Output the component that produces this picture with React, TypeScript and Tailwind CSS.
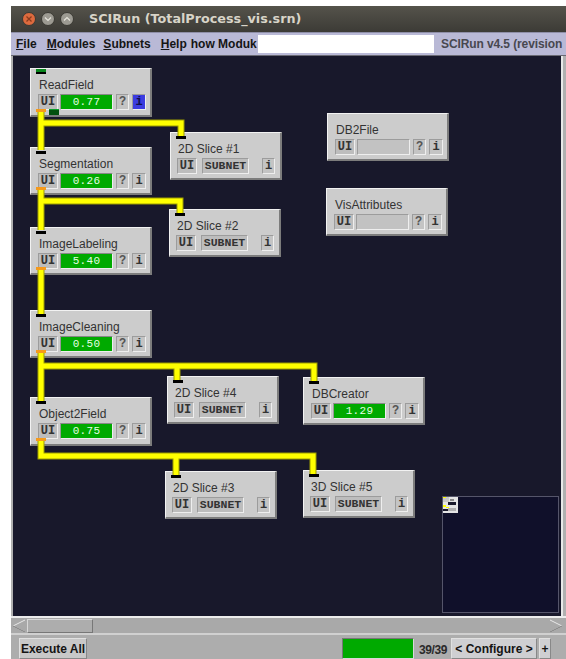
import type { ReactNode } from "react";

const MONO = "font-['Liberation_Mono',monospace]";

type ModuleNode = {
  name: string;
  box: string;
  value?: string;
  kind: "module" | "subnet";
  inPort?: boolean;
  outPort?: boolean;
  sourcePort?: boolean;
  active?: boolean;
};

const NODES: ModuleNode[] = [
  { name: "ReadField", box: "left-[17px] top-[12px] w-[122px] h-[49px]", value: "0.77", kind: "module", outPort: true, sourcePort: true, active: true },
  { name: "Segmentation", box: "left-[17px] top-[91px] w-[122px] h-[48px]", value: "0.26", kind: "module", inPort: true, outPort: true },
  { name: "ImageLabeling", box: "left-[17px] top-[171px] w-[122px] h-[48px]", value: "5.40", kind: "module", inPort: true, outPort: true },
  { name: "ImageCleaning", box: "left-[17px] top-[254px] w-[122px] h-[48px]", value: "0.50", kind: "module", inPort: true, outPort: true },
  { name: "Object2Field", box: "left-[17px] top-[341px] w-[122px] h-[49px]", value: "0.75", kind: "module", inPort: true, outPort: true },
  { name: "2D Slice #1", box: "left-[157px] top-[76px] w-[112px] h-[48px]", kind: "subnet", inPort: true },
  { name: "2D Slice #2", box: "left-[156px] top-[153px] w-[112px] h-[48px]", kind: "subnet", inPort: true },
  { name: "2D Slice #4", box: "left-[154px] top-[320px] w-[112px] h-[48px]", kind: "subnet", inPort: true },
  { name: "2D Slice #3", box: "left-[152px] top-[415px] w-[112px] h-[48px]", kind: "subnet", inPort: true },
  { name: "3D Slice #5", box: "left-[290px] top-[414px] w-[112px] h-[48px]", kind: "subnet", inPort: true },
  { name: "DBCreator", box: "left-[290px] top-[321px] w-[122px] h-[48px]", value: "1.29", kind: "module", inPort: true },
  { name: "DB2File", box: "left-[314px] top-[57px] w-[122px] h-[48px]", kind: "module" },
  { name: "VisAttributes", box: "left-[313px] top-[132px] w-[122px] h-[48px]", kind: "module" },
];

// Pipes in canvas-space pixels, trunk first, then branches off it
const WIRES = [
  "28,55 28,94",
  "28,67 168,67 168,80",
  "28,133 28,174",
  "28,145 167,145 167,157",
  "28,213 28,259",
  "28,296 28,346",
  "28,310 301,310 301,326",
  "164,310 164,325",
  "28,383 28,400 300,400 300,419",
  "163,400 163,420",
];

function Bevel({ className, children }: { className: string; children?: ReactNode }) {
  return (
    <div
      className={`box-border flex h-[16px] items-center justify-center border border-t-[#9c9c9c] border-l-[#9c9c9c] border-r-[#eeeeee] border-b-[#eeeeee] text-[#333] ${MONO} ${className}`}
    >
      {children}
    </div>
  );
}

function Node({ node }: { node: ModuleNode }) {
  const isSubnet = node.kind === "subnet";
  return (
    <div
      className={`absolute box-border border border-t-[#f2f2f2] border-l-[#f2f2f2] border-r-[2px] border-b-[2px] border-r-[#7c7c7c] border-b-[#7c7c7c] bg-[#cccccc] ${node.box}`}
    >
      {node.name === "ReadField" && (
        <div className="absolute left-[5px] top-0 z-20 h-[5px] w-[10px] border-b-2 border-black bg-[#08861c]" />
      )}
      {node.inPort && (
        <div className="absolute left-[5px] top-[3px] z-20 h-[3px] w-[10px] bg-black" />
      )}
      {node.outPort && (
        <div className="absolute bottom-[3px] left-[5px] z-20 h-[3px] w-[10px] bg-[#f59a1c]" />
      )}
      {node.sourcePort && (
        <div className="absolute bottom-0 left-[18px] z-20 h-[6px] w-[10px] border-t border-[#0aa02a] bg-[#03500f]" />
      )}
      <div
        className={`h-[25px] pt-[9px] font-['Liberation_Sans',sans-serif] text-[12px] leading-[14px] text-[#333] ${isSubnet ? "pl-[7px]" : "pl-[8px]"}`}
      >
        {node.name}
      </div>
      {isSubnet ? (
        <div className="flex pl-[6px]">
          <Bevel className="w-[20px] bg-[#bdbdbd] text-[12px] font-bold">UI</Bevel>
          <Bevel className="ml-[5px] w-[47px] bg-[#bdbdbd] text-[11.5px] font-bold">SUBNET</Bevel>
          <Bevel className="ml-[13px] w-[13px] bg-[#c4c4c4] text-[12px] font-bold">i</Bevel>
        </div>
      ) : (
        <div className="flex pl-[7px]">
          <Bevel className="w-[20px] bg-[#bdbdbd] text-[12px] font-bold">UI</Bevel>
          {node.value ? (
            <Bevel className="ml-[2px] w-[53px] !border-t-[#888] !border-l-[#999] bg-[#00aa00] text-[11px] tracking-[0.3px] !text-[#e4ffe4]">
              {node.value}
            </Bevel>
          ) : (
            <Bevel className="ml-[2px] w-[53px] bg-[#c2c2c2]" />
          )}
          <Bevel className="ml-[3px] w-[13px] bg-[#c4c4c4] text-[12px] font-bold !text-[#555]">?</Bevel>
          <Bevel
            className={`ml-[3px] w-[14px] text-[12px] font-bold ${node.active ? "bg-[#3c3ce0] !text-[#10104a]" : "bg-[#c4c4c4]"}`}
          >
            i
          </Bevel>
        </div>
      )}
    </div>
  );
}

function WindowButton({ kind }: { kind: "close" | "min" | "max" }) {
  return (
    <div
      className={`flex h-[14px] w-[14px] items-center justify-center rounded-full border border-[#3a3933] ${
        kind === "close" ? "bg-[#dd6a3e]" : "bg-[#9c9a92]"
      }`}
    >
      <svg width="8" height="8" viewBox="0 0 8 8" fill="none" strokeWidth="1.2" stroke={kind === "close" ? "#8a3a1c" : "#e6e4dc"}>
        {kind === "close" && <path d="M1.5 1.5 6.5 6.5M6.5 1.5 1.5 6.5" />}
        {kind === "min" && <path d="M1 2.5 4 5.5 7 2.5" />}
        {kind === "max" && <path d="M1 5.5 4 2.5 7 5.5" />}
      </svg>
    </div>
  );
}

function MenuItem({ first, rest, className = "" }: { first: string; rest: string; className?: string }) {
  return (
    <span className={className}>
      <span className="underline">{first}</span>
      {rest}
    </span>
  );
}

function Minimap() {
  return (
    <div className="absolute left-[429px] top-[440px] box-border h-[117px] w-[117px] border border-[#55556a] bg-[#10102a]">
      <svg className="block" width="15" height="16" viewBox="0 0 15 16">
        <rect width="15" height="16" fill="#e4e4e4" />
        <rect x="0" y="0" width="6" height="5" fill="#c8c8c8" />
        <rect x="0" y="0" width="3" height="1" fill="#ffff00" />
        <rect x="7" y="2" width="4" height="2" fill="#8a8a8a" />
        <rect x="5" y="5" width="8" height="3" fill="#18182a" />
        <rect x="0" y="8" width="3" height="2" fill="#ffff00" />
        <rect x="3" y="10" width="3" height="1" fill="#ffff00" />
        <rect x="0" y="12" width="5" height="2" fill="#18182a" />
        <rect x="5" y="11" width="8" height="3" fill="#b0b0b0" />
      </svg>
    </div>
  );
}

export default function App() {
  return (
    <div className="flex h-[659px] w-[566px] flex-col overflow-hidden bg-white pl-[11px] pt-[6px] font-['Liberation_Sans',sans-serif]">
      {/* window manager title bar */}
      <div className="flex h-[26px] shrink-0 items-center bg-gradient-to-b from-[#55534b] to-[#3c3b36] pl-[11px]">
        <div className="flex gap-[5px]">
          <WindowButton kind="close" />
          <WindowButton kind="min" />
          <WindowButton kind="max" />
        </div>
        <span className="ml-[15px] font-['DejaVu_Sans',sans-serif] text-[12.75px] font-bold leading-none text-[#d8d4c8]">
          SCIRun (TotalProcess_vis.srn)
        </span>
      </div>

      {/* menu bar */}
      <div className="flex h-[23px] shrink-0 items-center border-t border-[#8f8fa8] bg-[#b9b9d6] text-[12px] font-bold text-[#151515]">
        <div className="flex w-[247px] shrink-0 whitespace-nowrap pl-[5px]">
          <MenuItem first="F" rest="ile" />
          <MenuItem first="M" rest="odules" className="ml-[10px]" />
          <MenuItem first="S" rest="ubnets" className="ml-[8px]" />
          <MenuItem first="H" rest="elp" className="ml-[10px]" />
          <span className="ml-[4px]">how Moduk</span>
        </div>
        <div className="h-[18px] w-[176px] shrink-0 bg-white" />
        <span className="ml-[7px] whitespace-nowrap tracking-[-0.1px] text-[#484850]">SCIRun v4.5 (revision</span>
      </div>

      {/* network canvas with the vertical scrollbar edge */}
      <div className="flex h-[561px] shrink-0 border-t border-[#6a6a74] bg-[#b0b0b0]">
        <div className="relative ml-[2px] h-full w-[548px] shrink-0 overflow-hidden bg-[#18182b]">
          {NODES.map((node) => (
            <Node key={node.name} node={node} />
          ))}
          <svg className="pointer-events-none absolute left-0 top-0 z-10" width="548" height="558" fill="none">
            {WIRES.map((points) => (
              <polyline key={points} points={points} stroke="#9c9c00" strokeWidth="7" />
            ))}
            {WIRES.map((points) => (
              <polyline key={points} points={points} stroke="#ffff00" strokeWidth="5" />
            ))}
          </svg>
          <Minimap />
        </div>
        <div className="w-[2px] bg-[#e8e8e8]" />
      </div>

      {/* horizontal scrollbar */}
      <div className="flex h-[17px] shrink-0 items-center border-t-2 border-[#ececec] bg-[#a9a9a9] pl-[1px]">
        <svg width="14" height="14" viewBox="0 0 14 14" fill="none" className="shrink-0">
          <path d="M13 1 1 7 13 13" stroke="#e8e8e8" />
          <path d="M1 7 13 13" stroke="#777" />
        </svg>
        <div className="ml-[1px] box-border h-[14px] w-[66px] border border-[#d8d8d8] border-b-[#777] border-r-[#777] bg-[#adadad]" />
        <div className="flex-1" />
        <svg width="14" height="14" viewBox="0 0 14 14" fill="none" className="mr-[3px] shrink-0">
          <path d="M1 1 13 7 1 13" stroke="#e8e8e8" />
          <path d="M13 7 1 13" stroke="#777" />
        </svg>
      </div>

      {/* status footer */}
      <div className="flex flex-1 items-start border-t-2 border-[#d0d0d0] bg-[#adadad] pt-[3px] text-[12px] font-bold text-[#141414]">
        <button className="ml-[8px] box-border h-[21px] w-[68px] border border-[#e0e0e0] border-b-[#888] border-r-[#888] bg-[#c8c8c8] leading-none">
          Execute All
        </button>
        <div className="ml-[255px] box-border h-[21px] w-[72px] border border-[#d8d8d8] border-t-[#777] border-l-[#777] bg-[#00aa00]" />
        <span className="ml-[5px] w-[28px] pt-[3px] font-bold tracking-[-0.4px] text-[#2a2a2a]">39/39</span>
        <button className="ml-[4px] box-border h-[21px] w-[86px] border border-[#e0e0e0] border-b-[#888] border-r-[#888] bg-[#cfcfd2] leading-none">
          &lt; Configure &gt;
        </button>
        <button className="ml-[2px] box-border h-[21px] w-[12px] border border-[#e0e0e0] border-b-[#888] border-r-[#888] bg-[#cfcfd2] leading-none">
          +
        </button>
      </div>
    </div>
  );
}
